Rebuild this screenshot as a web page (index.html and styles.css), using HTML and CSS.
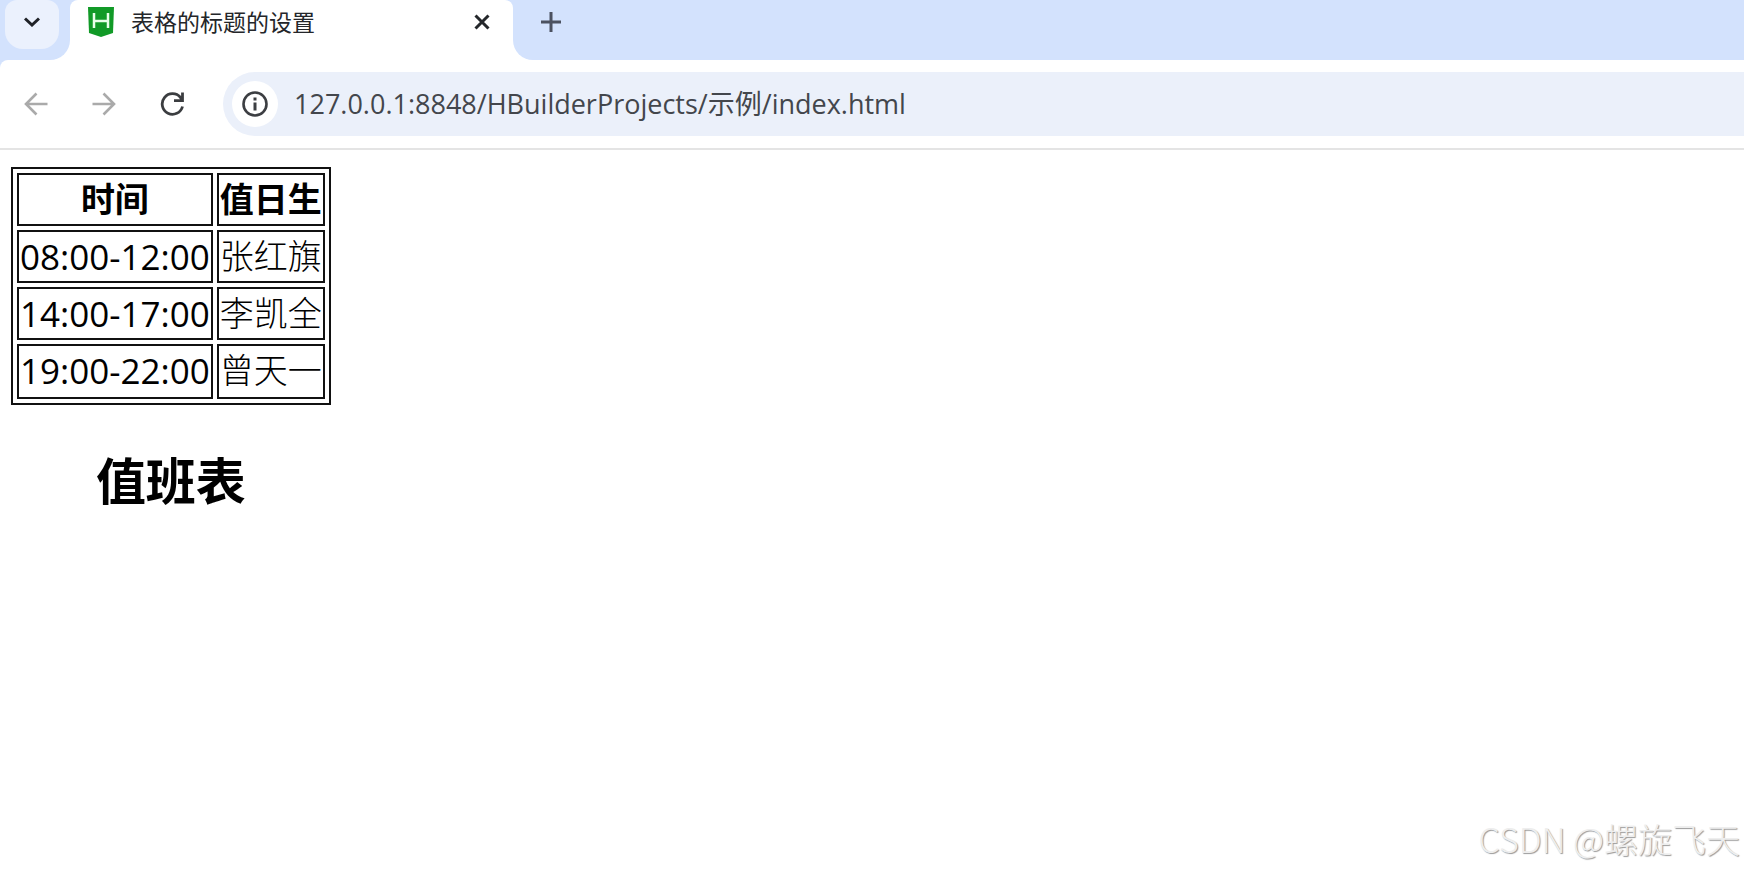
FILE: index.html
```html
<!DOCTYPE html>
<html lang="zh-CN">
<head>
<meta charset="utf-8">
<title>表格的标题的设置</title>
<link rel="stylesheet" href="styles.css">
</head>
<body>
<header class="browser">
  <div class="tab-strip">
    <div class="tab-search-area">
      <button class="tab-search" type="button" aria-label="搜索标签页">
        <svg width="16" height="10" viewBox="0 0 16 10" fill="none" stroke="#1f2227" stroke-width="3"><path d="M1 1.500 8 8l7-6.500"/></svg>
      </button>
    </div>
    <div class="tab">
      <svg class="favicon" width="26" height="30" viewBox="0 0 26 30"><path fill="#119a27" d="M0 0h26l-1 26-12 4-12-4z"/><path fill="none" stroke="#e9ffe9" stroke-width="2.500" d="M6 6v15M20 6v15M6 14h14"/></svg>
      <span class="tab-title">表格的标题的设置</span>
      <button class="icon-button" type="button" aria-label="关闭">
        <svg width="16" height="16" viewBox="0 0 16 16" stroke="#24272b" stroke-width="3"><path d="M1.500 1.500l13 13M14.500 1.500l-13 13"/></svg>
      </button>
    </div>
    <div class="strip-rest">
      <button class="icon-button" type="button" aria-label="新标签页">
        <svg width="20" height="20" viewBox="0 0 20 20" stroke="#4b5160" stroke-width="3"><path d="M10 0v20M0 10h20"/></svg>
      </button>
    </div>
  </div>
  <div class="toolbar">
    <nav class="nav">
      <button class="icon-button" type="button" aria-label="后退">
        <svg width="24" height="24" viewBox="0 0 24 24" fill="none" stroke="#aaa" stroke-width="2.600"><path d="M23.500 12H2.500M12.500 1.500 2 12l10.500 10.500"/></svg>
      </button>
      <button class="icon-button" type="button" aria-label="前进">
        <svg width="24" height="24" viewBox="0 0 24 24" fill="none" stroke="#aaa" stroke-width="2.600"><path d="M.5 12h21M11.500 1.500 22 12 11.500 22.500"/></svg>
      </button>
      <button class="icon-button" type="button" aria-label="重新加载">
        <svg width="24" height="24" viewBox="0 0 24 24" fill="none" stroke="#3b3d40" stroke-width="2.800"><path d="M22.500 14.500A10.300 10.300 0 1 1 20.500 5.500L22.500 8M22.500 .5v8.200h-8.500"/></svg>
      </button>
    </nav>
    <div class="omnibox">
      <button class="site-info" type="button" aria-label="网站信息">
        <svg width="26" height="26" viewBox="0 0 26 26"><circle cx="13" cy="13" r="11.500" fill="none" stroke="#3c3e42" stroke-width="2.600"/><path fill="#3c3e42" d="M11.500 6.500h3v3h-3zM11.500 11.500h3v8h-3z"/></svg>
      </button>
      <input class="url" type="text" aria-label="地址" value="127.0.0.1:8848/HBuilderProjects/示例/index.html">
    </div>
  </div>
</header>
<main class="page">
  <table class="duty">
    <caption>值班表</caption>
    <thead>
      <tr><th>时间</th><th>值日生</th></tr>
    </thead>
    <tbody>
      <tr><td class="time">08:00-12:00</td><td class="name">张红旗</td></tr>
      <tr><td class="time">14:00-17:00</td><td class="name">李凯全</td></tr>
      <tr><td class="time">19:00-22:00</td><td class="name">曾天一</td></tr>
    </tbody>
  </table>
</main>
<footer class="watermark">CSDN @螺旋飞天</footer>
</body>
</html>
```
FILE: styles.css
```css
* {
  box-sizing: border-box;
}

body {
  margin: 0;
  min-height: 100vh;
  display: flex;
  flex-direction: column;
  background: #fff;
  color: #000;
  font-family: "Open Sans", "Noto Sans CJK SC", sans-serif;
}

button {
  border: 0;
  padding: 0;
  background: none;
  display: flex;
  align-items: center;
  justify-content: center;
}

.browser {
  background: #d3e2fd;
}

.tab-strip {
  display: flex;
  height: 60px;
  background: linear-gradient(#d3e2fd 20px, #fff 20px);
}

.tab-search-area {
  width: 70px;
  padding-left: 5px;
  background: #d3e2fd;
  border-radius: 0 0 20px 0;
}

.tab-search {
  width: 54px;
  height: 49px;
  padding-bottom: 5px;
  background: #ebf1fd;
  border-radius: 12px 12px 18px 18px;
}

.tab {
  width: 443px;
  height: 44px;
  padding: 0 13px 0 18px;
  display: flex;
  align-items: center;
  background: #fff;
  border-radius: 8px 8px 0 0;
}

.tab-title {
  flex: 1;
  padding-left: 17px;
  font-size: 23px;
  line-height: 44px;
  color: #24262a;
}

.icon-button {
  width: 36px;
  height: 36px;
}

.strip-rest {
  flex: 1;
  padding: 4px 0 0 20px;
  background: #d3e2fd;
  border-radius: 0 0 0 20px;
}

.toolbar {
  display: flex;
  height: 90px;
  padding: 12px 0 12px 18px;
  background: #fff;
  border-bottom: 2px solid #e4e4e4;
  border-top-left-radius: 8px;
}

.nav {
  display: flex;
  align-items: center;
  gap: 32px;
  padding-right: 33px;
}

.omnibox {
  flex: 1;
  display: flex;
  align-items: center;
  gap: 16px;
  padding-left: 9px;
  background: #ebf0fa;
  border-radius: 32px 0 0 32px;
}

.site-info {
  width: 46px;
  height: 46px;
  border-radius: 50%;
  background: #fff;
}

.url {
  flex: 1;
  padding: 0 0 4px;
  border: 0;
  outline: 0;
  background: none;
  color: #43464c;
  font: 27px "Open Sans", "Noto Sans CJK SC", sans-serif;
}

.page {
  flex: 1;
  padding: 17px 11px;
}

.duty {
  border: 2px solid #111;
  border-spacing: 4px;
  font-size: 34px;
  line-height: 45px;
}

.duty caption {
  caption-side: bottom;
  padding-top: 42px;
  font-size: 50px;
  font-weight: bold;
  line-height: 68px;
}

.duty th,
.duty td {
  padding: 2px 1px;
  border: 2px solid #111;
}

.duty .time {
  font-size: 35px;
}

.duty .name {
  font-weight: 300;
}

.duty tr:last-child td {
  padding-bottom: 4px;
}

.watermark {
  padding: 0 4px 8px;
  text-align: right;
  font: 300 34px/48px "Noto Sans CJK SC", sans-serif;
  color: #eee;
  text-shadow: 1px 1px 1px #999;
}
```
